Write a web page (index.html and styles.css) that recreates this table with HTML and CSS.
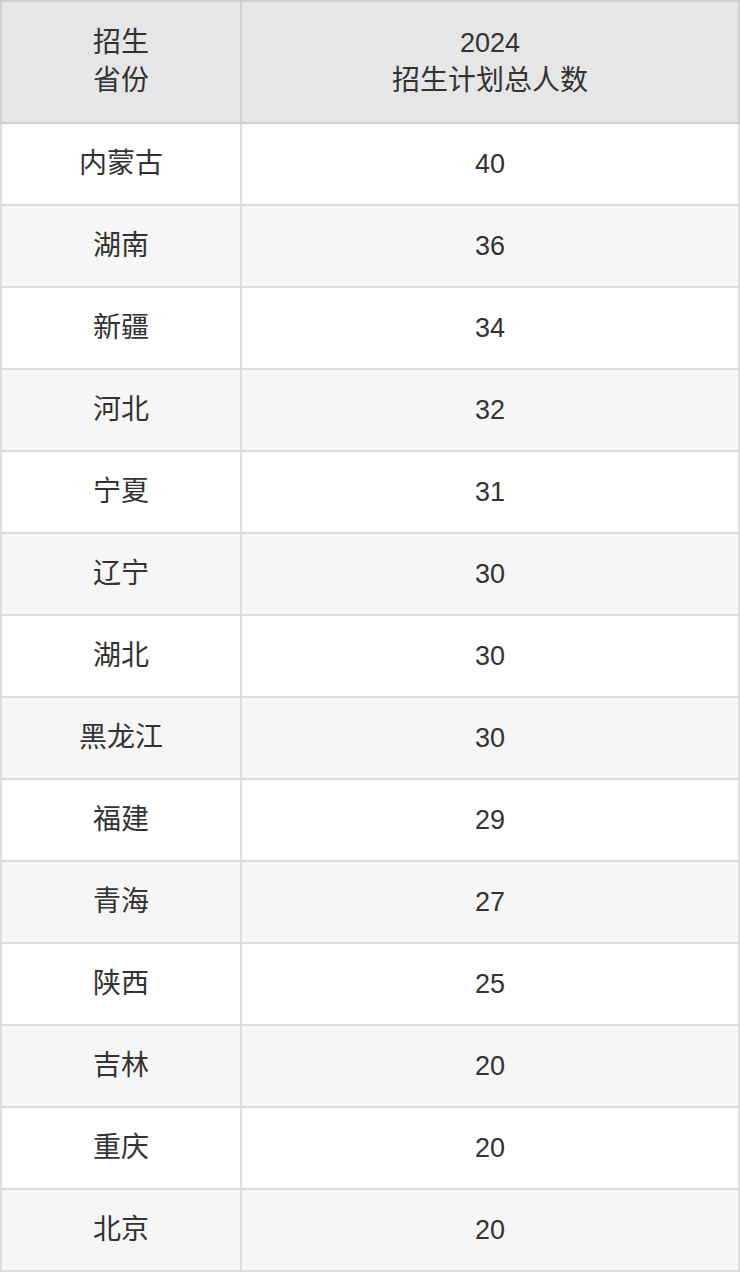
FILE: index.html
```html
<!DOCTYPE html>
<html lang="zh">
<head>
<meta charset="utf-8">
<link rel="stylesheet" href="styles.css">
</head>
<body>
<table class="plan">
  <thead>
    <tr>
      <th class="col-prov"><span class="cjk">招生<br>省份</span></th>
      <th>2024<br><span class="cjk">招生计划总人数</span></th>
    </tr>
  </thead>
  <tbody>
    <tr><td>内蒙古</td><td>40</td></tr>
    <tr><td>湖南</td><td>36</td></tr>
    <tr><td>新疆</td><td>34</td></tr>
    <tr><td>河北</td><td>32</td></tr>
    <tr><td>宁夏</td><td>31</td></tr>
    <tr><td>辽宁</td><td>30</td></tr>
    <tr><td>湖北</td><td>30</td></tr>
    <tr><td>黑龙江</td><td>30</td></tr>
    <tr><td>福建</td><td>29</td></tr>
    <tr><td>青海</td><td>27</td></tr>
    <tr><td>陕西</td><td>25</td></tr>
    <tr><td>吉林</td><td>20</td></tr>
    <tr><td>重庆</td><td>20</td></tr>
    <tr><td>北京</td><td>20</td></tr>
  </tbody>
</table>
</body>
</html>
```

FILE: styles.css
```css
html, body {
  margin: 0;
  padding: 0;
  background: #ffffff;
}
.plan {
  width: 740px;
  border-collapse: collapse;
  table-layout: fixed;
  font-family: "Liberation Sans", "Noto Sans CJK SC", sans-serif;
  font-size: 27px;
  color: #333333;
}
.plan th, .plan td {
  border: 2px solid #dddddd;
  text-align: center;
  vertical-align: middle;
  padding: 0;
  font-weight: normal;
}
.plan th {
  background: #e6e6e6;
  border-color: #d0d0d0;
  height: 120px;
  line-height: 38px;
}
.plan th.col-prov {
  width: 238px;
}
.plan .cjk {
  font-size: 28px;
}
.plan td {
  height: 80px;
  line-height: 30px;
}
.plan td:first-child {
  font-size: 28px;
}
.plan tbody tr:nth-child(even) td {
  background: #f6f6f6;
}
```
